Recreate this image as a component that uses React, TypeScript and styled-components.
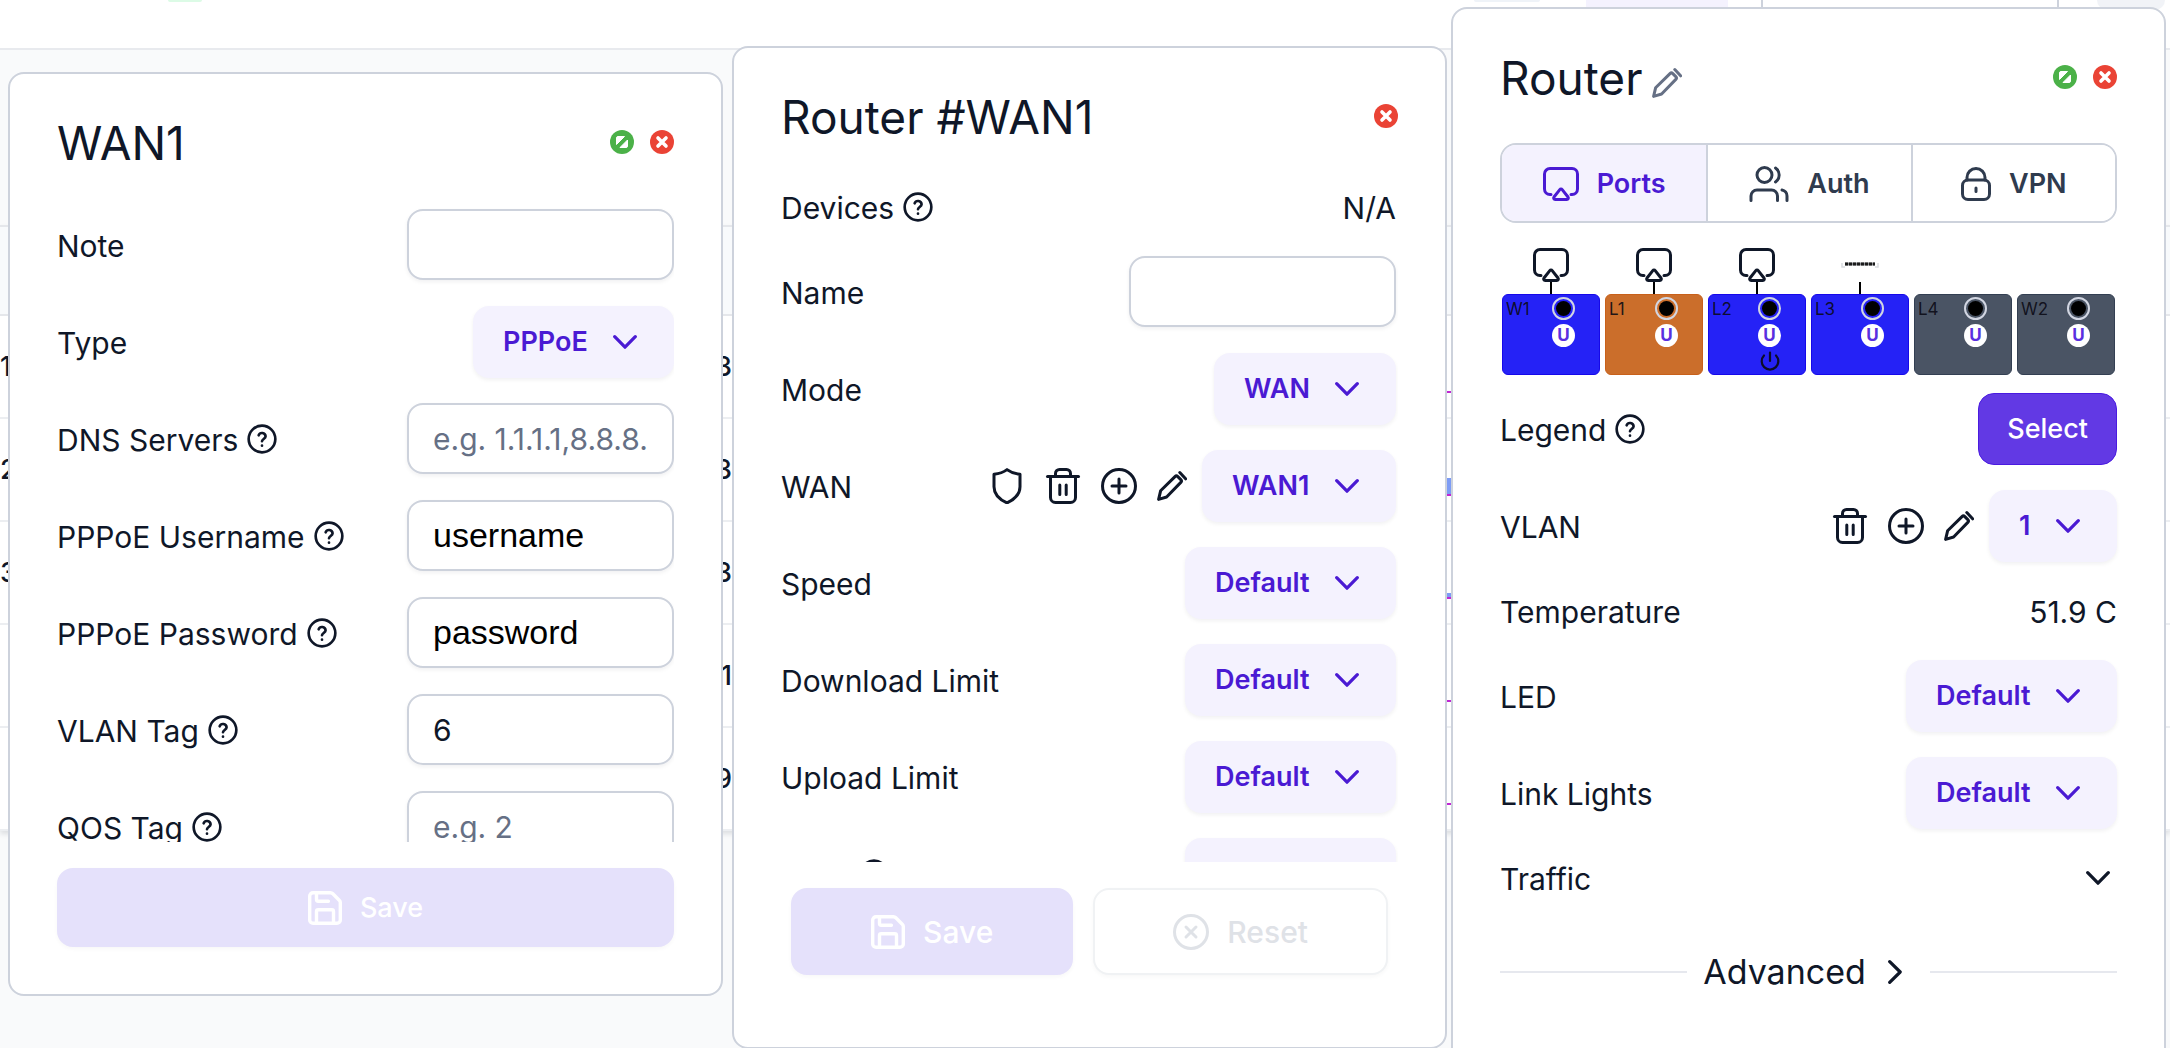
import React from "react";
import styled, { createGlobalStyle } from "styled-components";

const ink = "#0f1728";
const line = "#cdd2dc";
const violet = "#4a1ad3";
const lilac = "#f4f2fe";

const GlobalStyle = createGlobalStyle`
  *, *::before, *::after { box-sizing: border-box; }
  body {
    margin: 0;
    background: #f9fafb;
    color: ${ink};
    font-family: Inter, "Liberation Sans", sans-serif;
    font-size: 30px;
    line-height: 48px;
  }
  button, input, select { font: inherit; color: inherit; margin: 0; }
  button { cursor: pointer; }
  svg { display: block; flex: none; }
`;

/* ---------- icons ---------- */

type IconProps = { w: number; h?: number; box?: string; stroke?: number; children: React.ReactNode };

const Icon = ({ w, h = w, box, stroke = 3, children }: IconProps) => (
  <svg
    width={w}
    height={h}
    viewBox={box ?? `0 0 ${w} ${h}`}
    fill="none"
    stroke="currentColor"
    strokeWidth={stroke}
    strokeLinecap="round"
    strokeLinejoin="round"
    aria-hidden="true"
  >
    {children}
  </svg>
);

const HelpIcon = () => (
  <Icon w={32} box="0 0 24 24" stroke={2}>
    <circle cx="12" cy="12" r="10" />
    <path d="M9.5 9.2a2.700 2.700 0 0 1 5.200.8c0 1.800-2.700 2.200-2.700 3.700" />
    <path d="M12 17h.01" />
  </Icon>
);

const ShieldIcon = () => (
  <Icon w={36}>
    <path d="M18 1.600c4 3 8.500 4.200 13 4.600v12.500c0 7.500-5 12.500-13 16.200-8-3.700-13-8.700-13-16.200V6.200c4.500-.4 9-1.600 13-4.600z" />
  </Icon>
);

const TrashIcon = () => (
  <Icon w={36}>
    <path d="M2.500 8.500h31" />
    <path d="M10.500 8.500V5.500a4 4 0 0 1 4-4h7a4 4 0 0 1 4 4v3" />
    <path d="M5.500 8.500v21a5 5 0 0 0 5 5h15a5 5 0 0 0 5-5v-21" />
    <path d="M14.800 17v9.500M21.200 17v9.500" />
  </Icon>
);

const PlusIcon = () => (
  <Icon w={36}>
    <circle cx="18" cy="18" r="16.500" />
    <path d="M18 11v14M11 18h14" />
  </Icon>
);

const PencilIcon = () => (
  <Icon w={30} stroke={3}>
    <path d="M1.600 28.400l2-8.600L18 5.600a2 2 0 0 1 2.800 0l3 3a2 2 0 0 1 0 2.800L9.600 26z" />
    <path d="M22.800 1.600l5.800 6.200" />
  </Icon>
);

const ChevronDown = () => (
  <Icon w={24} h={14} stroke={3.200}>
    <path d="M1.700 1.700l10.300 10.500L22.300 1.700" />
  </Icon>
);

const ChevronRight = () => (
  <Icon w={14} h={24} stroke={3.200}>
    <path d="M1.700 1.700l10.500 10.300L1.700 22.300" />
  </Icon>
);

const SaveIcon = () => (
  <Icon w={34} box="2 2 20 20" stroke={2}>
    <path d="M15.200 3a2 2 0 0 1 1.400.6l3.800 3.800a2 2 0 0 1 .6 1.400V19a2 2 0 0 1-2 2H5a2 2 0 0 1-2-2V5a2 2 0 0 1 2-2z" />
    <path d="M17 21v-7a1 1 0 0 0-1-1H8a1 1 0 0 0-1 1v7M7 3v4a1 1 0 0 0 1 1h6" />
  </Icon>
);

const CancelIcon = () => (
  <Icon w={36}>
    <circle cx="18" cy="18" r="16.500" />
    <path d="M13 13l10 10M23 13L13 23" />
  </Icon>
);

const ScreenIcon = () => (
  <Icon w={36} h={34}>
    <path d="M8 27.500H7a5.500 5.500 0 0 1-5.500-5.500V7A5.500 5.500 0 0 1 7 1.500h22A5.500 5.500 0 0 1 34.500 7v15a5.500 5.500 0 0 1-5.500 5.500h-1" />
    <path d="M16.800 22.600L11 30c-.8 1.200-.2 2.500 1.200 2.500h11.600c1.400 0 2-1.300 1.200-2.500l-5.800-7.400c-.6-.8-1.800-.8-2.400 0z" />
  </Icon>
);

const UsersIcon = () => (
  <Icon w={40} h={36}>
    <circle cx="15.500" cy="9" r="7.500" />
    <path d="M26.500 2a8.500 8.500 0 0 1 0 14" />
    <path d="M2 34.500v-4.500a6 6 0 0 1 6-6h14.500a6 6 0 0 1 6 6v4.500" />
    <path d="M33 24a6 6 0 0 1 5 6v4.500" />
  </Icon>
);

const LockIcon = () => (
  <Icon w={30} h={34}>
    <rect x="1.500" y="13" width="27" height="19.500" rx="5.500" />
    <path d="M6 13v-2.500a9 9 0 0 1 18 0V13M15 21v3.500" />
  </Icon>
);

const PowerIcon = () => (
  <Icon w={20} stroke={2.200}>
    <path d="M10 1.500v8.500M4 4.500a8.300 8.300 0 1 0 12 0" />
  </Icon>
);

const PlugIcon = () => (
  <svg width="38" height="8" viewBox="0 0 38 8" aria-hidden="true">
    <path d="M1 2v4h3M37 2v4h-3" fill="none" stroke="#d9dbe0" strokeWidth="1.500" />
    <path d="M4 3h30" stroke="#8a8c90" strokeWidth="3" />
    <path d="M4 3h30" stroke="#1b1b1b" strokeWidth="3" strokeDasharray="3 1" />
  </svg>
);

const ToggleBadge = () => (
  <svg width="24" height="24" viewBox="0 0 24 24" aria-hidden="true">
    <circle cx="12" cy="12" r="12" fill="#4bb148" />
    <path
      d="M8 6.500h6.500L6.500 14.500V8A1.500 1.500 0 0 1 8 6.500zM17.500 10v6a1.500 1.500 0 0 1-1.500 1.500h-6z"
      fill="#fff"
      stroke="#fff"
      strokeLinejoin="round"
    />
  </svg>
);

const CloseBadge = () => (
  <svg width="24" height="24" viewBox="0 0 24 24" aria-hidden="true">
    <circle cx="12" cy="12" r="12" fill="#ea4335" />
    <path d="M8 8l8 8M16 8l-8 8" stroke="#fff" strokeWidth="3.600" strokeLinecap="round" />
  </svg>
);

/* ---------- page behind the windows ---------- */

const Stage = styled.div`
  position: relative;
  height: 100vh;
  overflow: hidden;
`;

const Backdrop = styled.div`
  position: absolute;
  inset: 0;
`;

const TopBar = styled.header`
  display: flex;
  align-items: flex-start;
  height: 50px;
  padding: 0 5px 0 168px;
  background: #fff;
  border-bottom: 2px solid #e8eaee;
`;

const BarItem = styled.div<{ $w: number; $h: number; $gap?: number; $bg: string; $r?: number }>`
  width: ${(p) => p.$w}px;
  height: ${(p) => p.$h}px;
  margin-right: ${(p) => (p.$gap === undefined ? "auto" : `${p.$gap}px`)};
  background: ${(p) => p.$bg};
  border-radius: 0 0 ${(p) => p.$r ?? 0}px ${(p) => p.$r ?? 0}px;
`;

const SearchEdge = styled.div`
  width: 298px;
  height: 30px;
  margin-right: 38px;
  border: solid ${line};
  border-width: 0 2px 2px;
`;

const Listing = styled.table`
  width: 100%;
  margin-top: 175px;
  border-collapse: collapse;
  table-layout: fixed;
  font-size: 27px;
  font-weight: 500;
  line-height: 30px;
  box-shadow: 0 3px 5px rgba(15, 23, 42, 0.12);

  th { height: 89px; padding: 0; background: #f8fafc; border: solid #e5e7eb; border-width: 2px 0; }
  td { height: 103px; padding: 0; background: #fff; border-bottom: 2px solid #eceef1; text-align: right; }
`;

const Spark = styled.svg`
  width: 100%;
  height: 60px;
`;

const listing = [
  { id: "1", count: "3", fill: 0 },
  { id: "2", count: "3", fill: 16 },
  { id: "3", count: "3", fill: 4 },
  { id: "", count: "1", fill: 0 },
  { id: "", count: "9", fill: 0 },
];

/* ---------- windows ---------- */

const Desk = styled.main`
  position: relative;
  display: grid;
  grid-template-columns: 8px 1fr 9px 1fr 4px 1fr 4px;
  align-items: start;
`;

const Panel = styled.section<{ $col: number; $top: number; $tall?: boolean }>`
  grid-column: ${(p) => p.$col};
  grid-row: 1;
  margin-top: ${(p) => p.$top}px;
  padding: 44px 47px 47px;
  min-width: 0;
  min-height: ${(p) => (p.$tall ? "110vh" : "0")};
  background: #fff;
  border: 2px solid ${line};
  border-radius: 16px;
`;

const PanelHead = styled.div`
  display: flex;
  align-items: center;
  gap: 16px;
  height: 48px;
  margin-bottom: 42px;
`;

const Title = styled.h2`
  margin: 0;
  padding-top: 2px;
  font-size: 46px;
  font-weight: 400;
  line-height: 48px;
`;

const TitleGroup = styled.div`
  display: flex;
  align-items: flex-end;
  gap: 10px;
  flex: 1;
`;

const IconButton = styled.button`
  display: block;
  padding: 0;
  border: 0;
  background: none;
`;

const MutedIconButton = styled(IconButton)`
  padding-bottom: 4px;
  color: #667085;
`;

const Rows = styled.div<{ $max?: number; $gutter?: boolean }>`
  display: flex;
  flex-direction: column;
  gap: 24px;
  padding-right: ${(p) => (p.$gutter ? 2 : 0)}px;
  ${(p) => p.$max && `max-height: ${p.$max}px; overflow: hidden;`}
`;

const RowBox = styled.div<{ $plain?: boolean }>`
  display: flex;
  flex: none;
  align-items: center;
  justify-content: space-between;
  height: ${(p) => (p.$plain ? 49 : 73)}px;
`;

const LabelGroup = styled.div`
  display: flex;
  align-items: center;
  gap: 8px;

  > label, > span { padding-top: 2px; }
`;

const Tools = styled.div`
  display: flex;
  align-items: center;
  gap: 20px;
`;

const ToolSet = styled.div`
  display: flex;
  align-items: center;
  gap: 15px;
`;

const Field = styled.input<{ $plainFont?: boolean }>`
  width: 267px;
  height: 71px;
  padding: 0 24px;
  border: 2px solid ${line};
  border-radius: 16px;
  background: #fff;
  box-shadow: 0 2px 4px rgba(15, 23, 42, 0.06);
  outline: 0;
  ${(p) => p.$plainFont && `font-family: "Liberation Sans", Arial, sans-serif; font-size: 34px; color: #000;`}

  &::placeholder { color: #667085; opacity: 1; }
`;

const PickBox = styled.div`
  display: grid;
  align-items: center;
  color: ${violet};

  > * { grid-area: 1 / 1; }
  > svg { justify-self: end; margin-right: 37px; pointer-events: none; }
`;

const PickSelect = styled.select`
  height: 72px;
  padding: 0 86px 0 30px;
  border: 0;
  border-radius: 16px;
  appearance: none;
  background: ${lilac};
  box-shadow: 0 2px 4px rgba(15, 23, 42, 0.06);
  font-size: 27px;
  font-weight: 600;
`;

const Value = styled.span`
  padding-top: 2px;
`;

const Footer = styled.div<{ $inset?: boolean }>`
  display: flex;
  gap: 20px;
  margin-top: 26px;
  padding: ${(p) => (p.$inset ? "0 10px 25px" : "0")};
`;

const ActionButton = styled.button<{ $big?: boolean; $ghost?: boolean }>`
  display: flex;
  flex: 1 1 auto;
  align-items: center;
  justify-content: center;
  gap: 18px;
  height: ${(p) => (p.$big ? 87 : 79)}px;
  padding: 0;
  border: 2px solid ${(p) => (p.$ghost ? "#f0f2f4" : "#e5e1fb")};
  border-radius: 16px;
  background: ${(p) => (p.$ghost ? "#fff" : "#e5e1fb")};
  color: ${(p) => (p.$ghost ? "#dfe2e7" : "#fff")};
  box-shadow: 0 2px 4px rgba(15, 23, 42, 0.03);
  font-size: ${(p) => (p.$big ? 30 : 27)}px;
  font-weight: 500;
`;

const Tabs = styled.div`
  display: grid;
  grid-template-columns: repeat(3, 1fr);
  height: 80px;
  border: 2px solid ${line};
  border-radius: 16px;
  overflow: hidden;
`;

const Tab = styled.button<{ $on?: boolean }>`
  display: flex;
  align-items: center;
  justify-content: center;
  gap: 18px;
  padding: 2px 0 0;
  border: 0;
  background: ${(p) => (p.$on ? lilac : "#fff")};
  color: ${(p) => (p.$on ? violet : "#2f3b4e")};
  font-size: 27px;
  font-weight: 600;

  & + & { border-left: 2px solid ${line}; }
`;

const Ports = styled.div`
  display: grid;
  grid-template-columns: repeat(6, 1fr);
  gap: 5px;
  margin: 25px 0 17px;
  padding: 0 2px;
`;

const Port = styled.div`
  display: flex;
  flex-direction: column;
  align-items: center;
`;

const Plug = styled.div`
  display: flex;
  align-items: center;
  height: 34px;
`;

const Stem = styled.div<{ $on: boolean }>`
  width: 2px;
  height: 12px;
  background: ${(p) => (p.$on ? "#000" : "transparent")};
`;

const PortCard = styled.div<{ $bg: string; $edge: string }>`
  display: grid;
  grid-template-columns: 46px auto;
  align-items: start;
  justify-content: start;
  align-self: stretch;
  height: 81px;
  padding: 2px 3px;
  border: 1px solid ${(p) => p.$edge};
  border-radius: 6px;
  background: ${(p) => p.$bg};
  color: rgba(10, 10, 20, 0.9);
`;

const PortName = styled.span`
  padding-top: 2px;
  font-size: 17px;
  font-weight: 400;
  line-height: 20px;
`;

const PortMarks = styled.div`
  display: flex;
  flex-direction: column;
  align-items: center;
  gap: 4px;
`;

const Ring = styled.span`
  display: grid;
  place-items: center;
  width: 23px;
  height: 23px;
  border: 2px solid #d2d6e2;
  border-radius: 50%;

  &::after { content: ""; width: 15px; height: 15px; border-radius: 50%; background: #000; }
`;

const Tag = styled.span`
  width: 23px;
  height: 23px;
  border-radius: 50%;
  background: #fff;
  color: #5a2fe0;
  font-size: 17px;
  font-weight: 700;
  line-height: 23px;
  text-align: center;
`;

const SelectButton = styled.button`
  height: 72px;
  padding: 0 28px;
  border: 1px solid #4a1ae0;
  border-radius: 16px;
  background: #6239e4;
  color: #fff;
  font-size: 27px;
  font-weight: 500;
`;

const CollapseButton = styled(IconButton)`
  padding: 10px 7px;
`;

const Advanced = styled.div`
  display: flex;
  align-items: center;
  gap: 16px;
  margin-top: 46px;

  &::before, &::after { content: ""; flex: 1; height: 2px; background: #e6e8ee; }
`;

const AdvancedButton = styled.button`
  display: flex;
  align-items: center;
  gap: 22px;
  padding: 0 12px 0 0;
  border: 0;
  background: none;
  font-size: 34px;
`;

const HelpButton = ({ name }: { name: string }) => (
  <IconButton aria-label={`Help: ${name}`}>
    <HelpIcon />
  </IconButton>
);

type RowProps = { label: string; id?: string; help?: boolean; plain?: boolean; children: React.ReactNode };

const Row = ({ label, id, help, plain, children }: RowProps) => (
  <RowBox $plain={plain}>
    <LabelGroup>
      {id ? <label htmlFor={id}>{label}</label> : <span>{label}</span>}
      {help && <HelpButton name={label} />}
    </LabelGroup>
    {children}
  </RowBox>
);

const Pick = ({ id, value }: { id: string; value: string }) => (
  <PickBox>
    <PickSelect id={id} defaultValue={value}>
      <option>{value}</option>
    </PickSelect>
    <ChevronDown />
  </PickBox>
);

const ports = [
  { name: "W1", kind: "blue", plug: "screen" },
  { name: "L1", kind: "orange", plug: "screen" },
  { name: "L2", kind: "blue", plug: "screen", power: true },
  { name: "L3", kind: "blue", plug: "cable" },
  { name: "L4", kind: "slate" },
  { name: "W2", kind: "slate" },
];

const portColors: Record<string, [string, string]> = {
  blue: ["#2522f6", "#1608ea"],
  orange: ["#cb6e2b", "#c8601a"],
  slate: ["#4a5464", "#333f52"],
};

export default function App() {
  return (
    <>
      <GlobalStyle />
      <Stage>
        <Backdrop>
          <TopBar>
            <BarItem $w={34} $h={2} $bg="#dcfbe6" $r={2} />
            <BarItem $w={66} $h={2} $gap={46} $bg="#eff3f8" $r={2} />
            <BarItem $w={142} $h={7} $gap={33} $bg={lilac} />
            <SearchEdge />
            <BarItem $w={68} $h={10} $gap={0} $bg="#f1f3f7" $r={10} />
          </TopBar>
          <Listing>
            <colgroup>
              <col style={{ width: 9 }} />
              <col style={{ width: 723 }} />
              <col style={{ width: 720 }} />
              <col />
            </colgroup>
            <thead>
              <tr>
                <th />
                <th />
                <th />
                <th />
              </tr>
            </thead>
            <tbody>
              {listing.map((r, i) => (
                <tr key={i}>
                  <td>{r.id}</td>
                  <td>{r.count}</td>
                  <td>
                    <Spark viewBox="0 0 720 60" preserveAspectRatio="none">
                      {r.fill > 0 && <rect x="600" y={54 - r.fill} width="120" height={r.fill} fill="#7d9cf5" />}
                      <path d="M600 55H720" stroke="#c026d3" strokeWidth="2" />
                    </Spark>
                  </td>
                  <td />
                </tr>
              ))}
            </tbody>
          </Listing>
        </Backdrop>

        <Desk>
          <Panel $col={2} $top={72}>
            <PanelHead>
              <TitleGroup>
                <Title>WAN1</Title>
              </TitleGroup>
              <IconButton aria-label="Toggle WAN1">
                <ToggleBadge />
              </IconButton>
              <IconButton aria-label="Close WAN1">
                <CloseBadge />
              </IconButton>
            </PanelHead>
            <Rows $max={634}>
              <Row label="Note" id="note">
                <Field id="note" />
              </Row>
              <Row label="Type" id="type">
                <Pick id="type" value="PPPoE" />
              </Row>
              <Row label="DNS Servers" id="dns" help>
                <Field id="dns" placeholder="e.g. 1.1.1.1,8.8.8." />
              </Row>
              <Row label="PPPoE Username" id="user" help>
                <Field id="user" $plainFont defaultValue="username" />
              </Row>
              <Row label="PPPoE Password" id="pass" help>
                <Field id="pass" $plainFont defaultValue="password" />
              </Row>
              <Row label="VLAN Tag" id="vtag" help>
                <Field id="vtag" defaultValue="6" />
              </Row>
              <Row label="QOS Tag" id="qos" help>
                <Field id="qos" placeholder="e.g. 2" />
              </Row>
            </Rows>
            <Footer>
              <ActionButton>
                <SaveIcon />
                Save
              </ActionButton>
            </Footer>
          </Panel>

          <Panel $col={4} $top={46}>
            <PanelHead>
              <TitleGroup>
                <Title>Router #WAN1</Title>
              </TitleGroup>
              <IconButton aria-label="Close port">
                <CloseBadge />
              </IconButton>
            </PanelHead>
            <Rows $max={680} $gutter>
              <Row label="Devices" help plain>
                <Value>N/A</Value>
              </Row>
              <Row label="Name" id="name">
                <Field id="name" />
              </Row>
              <Row label="Mode" id="mode">
                <Pick id="mode" value="WAN" />
              </Row>
              <Row label="WAN" id="wan">
                <ToolSet>
                  <Tools>
                    <IconButton aria-label="Firewall">
                      <ShieldIcon />
                    </IconButton>
                    <IconButton aria-label="Delete WAN">
                      <TrashIcon />
                    </IconButton>
                    <IconButton aria-label="Add WAN">
                      <PlusIcon />
                    </IconButton>
                    <IconButton aria-label="Edit WAN">
                      <PencilIcon />
                    </IconButton>
                  </Tools>
                  <Pick id="wan" value="WAN1" />
                </ToolSet>
              </Row>
              <Row label="Speed" id="speed">
                <Pick id="speed" value="Default" />
              </Row>
              <Row label="Download Limit" id="down">
                <Pick id="down" value="Default" />
              </Row>
              <Row label="Upload Limit" id="up">
                <Pick id="up" value="Default" />
              </Row>
              <Row label="MTU" id="mtu" help>
                <Pick id="mtu" value="Default" />
              </Row>
            </Rows>
            <Footer $inset>
              <ActionButton $big>
                <SaveIcon />
                Save
              </ActionButton>
              <ActionButton $big $ghost>
                <CancelIcon />
                Reset
              </ActionButton>
            </Footer>
          </Panel>

          <Panel $col={6} $top={7} $tall>
            <PanelHead>
              <TitleGroup>
                <Title>Router</Title>
                <MutedIconButton aria-label="Rename router">
                  <PencilIcon />
                </MutedIconButton>
              </TitleGroup>
              <IconButton aria-label="Toggle router">
                <ToggleBadge />
              </IconButton>
              <IconButton aria-label="Close router">
                <CloseBadge />
              </IconButton>
            </PanelHead>
            <Tabs role="tablist">
              <Tab role="tab" aria-selected $on>
                <ScreenIcon />
                Ports
              </Tab>
              <Tab role="tab">
                <UsersIcon />
                Auth
              </Tab>
              <Tab role="tab">
                <LockIcon />
                VPN
              </Tab>
            </Tabs>
            <Ports>
              {ports.map((p) => (
                <Port key={p.name}>
                  <Plug>
                    {p.plug === "screen" && <ScreenIcon />}
                    {p.plug === "cable" && <PlugIcon />}
                  </Plug>
                  <Stem $on={!!p.plug} />
                  <PortCard $bg={portColors[p.kind][0]} $edge={portColors[p.kind][1]}>
                    <PortName>{p.name}</PortName>
                    <PortMarks>
                      <Ring />
                      <Tag>U</Tag>
                      {p.power && <PowerIcon />}
                    </PortMarks>
                  </PortCard>
                </Port>
              ))}
            </Ports>
            <Rows>
              <Row label="Legend" help>
                <SelectButton>Select</SelectButton>
              </Row>
              <Row label="VLAN" id="vlan">
                <ToolSet>
                  <Tools>
                    <IconButton aria-label="Delete VLAN">
                      <TrashIcon />
                    </IconButton>
                    <IconButton aria-label="Add VLAN">
                      <PlusIcon />
                    </IconButton>
                    <IconButton aria-label="Edit VLAN">
                      <PencilIcon />
                    </IconButton>
                  </Tools>
                  <Pick id="vlan" value="1" />
                </ToolSet>
              </Row>
              <Row label="Temperature" plain>
                <Value>51.9 C</Value>
              </Row>
              <Row label="LED" id="led">
                <Pick id="led" value="Default" />
              </Row>
              <Row label="Link Lights" id="lights">
                <Pick id="lights" value="Default" />
              </Row>
              <Row label="Traffic" plain>
                <CollapseButton aria-label="Show traffic">
                  <ChevronDown />
                </CollapseButton>
              </Row>
            </Rows>
            <Advanced>
              <AdvancedButton>
                Advanced
                <ChevronRight />
              </AdvancedButton>
            </Advanced>
          </Panel>
        </Desk>
      </Stage>
    </>
  );
}
